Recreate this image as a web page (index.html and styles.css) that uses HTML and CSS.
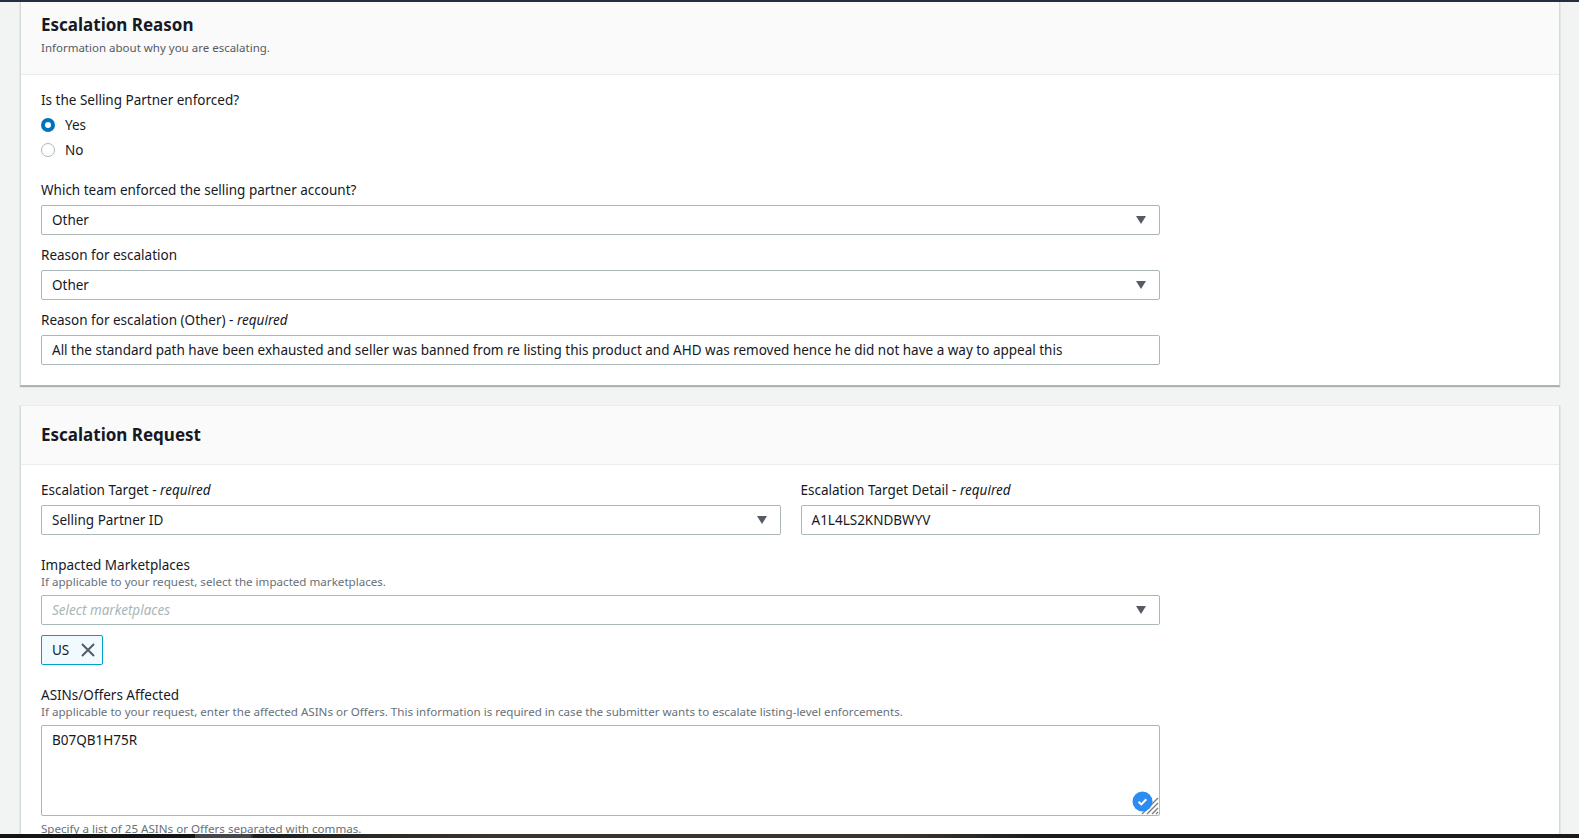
FILE: index.html
```html
<!DOCTYPE html>
<html lang="en">
<head>
    <meta charset="UTF-8">
    <title>Escalation</title>
    <link rel="stylesheet" href="styles.css">
</head>
<body>
    <div class="top-bar"></div>
    <div class="page">
        <!-- Escalation Reason -->
        <section class="card card-reason">
            <div class="card-header">
                <h2>Escalation Reason</h2>
                <p class="card-desc">Information about why you are escalating.</p>
            </div>
            <div class="card-body">
                <div class="field field-radio">
                    <div class="label">Is the Selling Partner enforced?</div>
                    <div class="radio-row"><span class="radio radio-on"></span>Yes</div>
                    <div class="radio-row"><span class="radio"></span>No</div>
                </div>
                <div class="field narrow">
                    <div class="label">Which team enforced the selling partner account?</div>
                    <div class="control select">Other<span class="caret"></span></div>
                </div>
                <div class="field narrow">
                    <div class="label">Reason for escalation</div>
                    <div class="control select">Other<span class="caret"></span></div>
                </div>
                <div class="field narrow">
                    <div class="label">Reason for escalation (Other) - <i>required</i></div>
                    <div class="control">All the standard path have been exhausted and seller was banned from re listing this product and AHD was removed hence he did not have a way to appeal this</div>
                </div>
            </div>
        </section>

        <!-- Escalation Request -->
        <section class="card card-request">
            <div class="card-header">
                <h2>Escalation Request</h2>
            </div>
            <div class="card-body">
                <div class="two-col">
                    <div class="field">
                        <div class="label">Escalation Target - <i>required</i></div>
                        <div class="control select">Selling Partner ID<span class="caret"></span></div>
                    </div>
                    <div class="field">
                        <div class="label">Escalation Target Detail - <i>required</i></div>
                        <div class="control">A1L4LS2KNDBWYV</div>
                    </div>
                </div>
                <div class="field narrow">
                    <div class="label">Impacted Marketplaces</div>
                    <div class="hint">If applicable to your request, select the impacted marketplaces.</div>
                    <div class="control select placeholder">Select marketplaces<span class="caret"></span></div>
                    <div class="tag">US
                        <svg class="tag-x" width="16" height="16" viewBox="0 0 16 16"><path d="M2 2l12 12M14 2L2 14" stroke="#545b64" stroke-width="2" fill="none"/></svg>
                    </div>
                </div>
                <div class="field narrow">
                    <div class="label">ASINs/Offers Affected</div>
                    <div class="hint">If applicable to your request, enter the affected ASINs or Offers. This information is required in case the submitter wants to escalate listing-level enforcements.</div>
                    <div class="control textarea">B07QB1H75R
                        <svg class="grip" width="18" height="18" viewBox="0 0 18 18"><path d="M1 17L17 1M6 17L17 6M11 17l6-6M15 17l2-2" stroke="#7d7d7d" stroke-width="1.4" fill="none"/></svg>
                        <svg class="check-badge" width="21" height="21" viewBox="0 0 21 21"><circle cx="10.5" cy="10.5" r="10" fill="#2b8cf2"/><path d="M6.5 10.8l2.8 2.6 5-5.2" stroke="#fff" stroke-width="2" fill="none"/></svg>
                    </div>
                    <div class="hint hint-below">Specify a list of 25 ASINs or Offers separated with commas.</div>
                </div>
            </div>
        </section>
    </div>
    <div class="bottom-bar"></div>
</body>
</html>
```

FILE: styles.css
```css
html, body {
    height: 838px;
    overflow: hidden;
}

body {
    margin: 0;
    background-color: #f2f3f3;
    font-family: "Noto Sans", Arial, sans-serif;
    font-size: 13.5px;
    line-height: 20px;
    color: #16191f;
}

.top-bar {
    height: 2px;
    background-color: #232f3e;
}

.bottom-bar {
    position: fixed;
    left: 0;
    right: 0;
    bottom: 0;
    height: 4px;
    background: linear-gradient(90deg, #141414 0, #141414 195px, #46464a 195px, #46464a 250px, #1c1c1c 254px, #3a342e 500px, #3a342e 900px, #1a1a1a 1050px);
}

.page {
    padding: 0 19px 0 20px;
}

.card {
    background-color: #fff;
    border-left: 1px solid #d5dbdb;
    border-right: 1px solid #d5dbdb;
    box-shadow: 0 1px 1px 0 rgba(0, 28, 36, 0.3);
}

.card-reason {
    height: 384px;
    border-bottom: 1px solid #aab7b8;
    box-sizing: border-box;
}

.card-request {
    margin-top: 19px;
    border-top: 1px solid #eaeded;
}

.card-header {
    background-color: #fafafa;
    border-bottom: 1px solid #eaeded;
    padding: 12px 20px 0;
}

.card-reason .card-header {
    height: 60px;
}

.card-request .card-header {
    height: 40px;
    padding-top: 18px;
}

.card-header h2 {
    margin: 0;
    font-size: 17px;
    line-height: 22px;
    font-weight: 700;
}

.card-desc {
    margin: 1px 0 0;
    font-size: 11.5px;
    line-height: 22px;
    color: #545b64;
}

.card-body {
    padding: 15px 19px 0 20px;
}

.field {
    margin-bottom: 10px;
}

.field-radio {
    margin-bottom: 18px;
}

.field-radio .label {
    height: 22px;
}

.narrow {
    width: 1119px;
}

.label {
    height: 25px;
}

.hint {
    margin: -5px 0 6px;
    font-size: 11.6px;
    line-height: 14px;
    color: #687078;
}

.hint-below {
    margin: 6px 0 0;
}

.radio-row {
    display: flex;
    align-items: center;
    height: 25px;
}

.radio {
    width: 14px;
    height: 14px;
    box-sizing: border-box;
    border: 1px solid #aab7b8;
    border-radius: 50%;
    margin-right: 10px;
}

.radio-on {
    border: 4px solid #0073bb;
    background-color: #fff;
}

.control {
    position: relative;
    height: 30px;
    box-sizing: border-box;
    border: 1px solid #aab7b8;
    border-radius: 2px;
    padding: 4px 10px;
    white-space: nowrap;
    background-color: #fff;
}

.placeholder {
    color: #aab7b8;
    font-style: italic;
}

.caret {
    position: absolute;
    top: 10px;
    right: 13px;
    width: 0;
    height: 0;
    border-left: 5.5px solid transparent;
    border-right: 5.5px solid transparent;
    border-top: 8px solid #545b64;
}

.two-col {
    display: grid;
    grid-template-columns: 1fr 1fr;
    column-gap: 20px;
    margin-bottom: 20px;
}

.two-col .field {
    margin-bottom: 0;
}

.tag {
    display: flex;
    align-items: center;
    width: fit-content;
    height: 30px;
    box-sizing: border-box;
    margin: 10px 0 20px;
    padding: 0 6px 0 10px;
    border: 1px solid #00a1c9;
    border-radius: 2px;
    background-color: #f1faff;
}

.tag-x {
    margin-left: 11px;
}

.textarea {
    height: 91px;
}

.grip {
    position: absolute;
    right: 0;
    bottom: 0;
}

.check-badge {
    position: absolute;
    right: 6px;
    bottom: 3px;
}
```
